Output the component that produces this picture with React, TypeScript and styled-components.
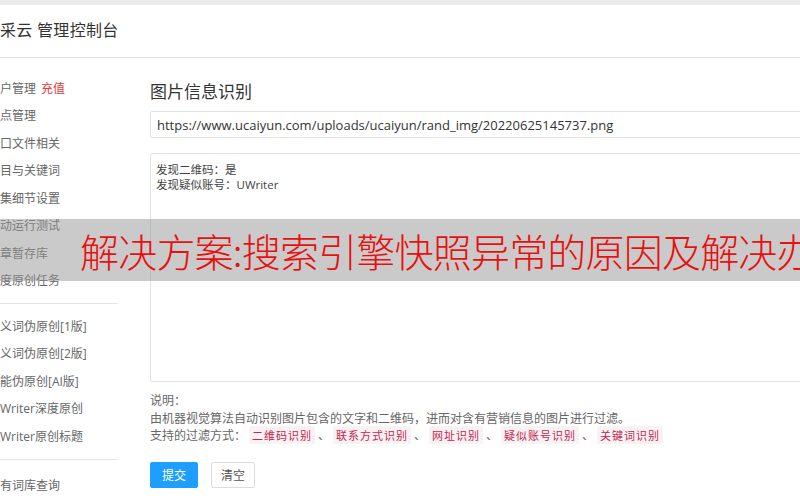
import React from "react";
import styled, { createGlobalStyle } from "styled-components";

const GlobalStyle = createGlobalStyle`
  html, body {
    margin: 0;
    padding: 0;
    background: #fff;
    overflow: hidden;
  }
  body {
    font-family: "Open Sans", "Noto Sans CJK SC", sans-serif;
    color: #333;
  }
`;

const Page = styled.div`
  position: relative;
  width: 800px;
  height: 500px;
  overflow: hidden;
  background: #fff;
`;

const TopStrip = styled.div`
  height: 5px;
  background: #ececec;
`;

const Header = styled.header`
  height: 53px;
  display: flex;
  align-items: center;
  border-bottom: 1px solid #e2e2e2;
  box-sizing: border-box;
  padding-bottom: 4px;
`;

const Title = styled.div`
  font-size: 16px;
  color: #333;
  letter-spacing: 0.3px;
  white-space: nowrap;
`;

const Body = styled.div`
  display: flex;
`;

const Sidebar = styled.nav`
  width: 150px;
  flex-shrink: 0;
  padding-top: 16px;
`;

const MenuItem = styled.div`
  height: 27.5px;
  display: flex;
  align-items: center;
  font-size: 12px;
  color: #666;
  white-space: nowrap;
`;

const Recharge = styled.span`
  color: #e4393c;
  margin-left: 5px;
`;

const Divider = styled.div<{ $after: number }>`
  width: 118px;
  height: 1px;
  background: #e6e6e6;
  margin: 9px 0 ${(p) => p.$after}px;
`;

const Main = styled.main`
  width: 690px;
  flex-shrink: 0;
  padding-top: 22px;
`;

const Heading = styled.h2`
  margin: 0;
  font-size: 17px;
  font-weight: normal;
  color: #333;
  line-height: 22px;
  font-family: "Noto Sans CJK SC", sans-serif;
`;

const UrlInput = styled.div`
  margin-top: 9px;
  height: 27px;
  box-sizing: border-box;
  border: 1px solid #e2e2e2;
  border-radius: 2px;
  padding: 0 6px;
  display: flex;
  align-items: center;
  font-size: 13px;
  color: #333;
  white-space: nowrap;
`;

const ResultBox = styled.div`
  margin-top: 15px;
  height: 229px;
  box-sizing: border-box;
  border: 1px solid #e2e2e2;
  border-radius: 2px;
  padding: 8px 5px;
  font-size: 11.5px;
  line-height: 15px;
  color: #444;
`;

const Notes = styled.div`
  margin-top: 9px;
  font-size: 12px;
  line-height: 17.5px;
  color: #666;
  font-family: "Noto Sans CJK SC", sans-serif;
`;

const Tag = styled.code`
  font-family: "Noto Sans CJK SC", sans-serif;
  font-size: 11px;
  letter-spacing: 1px;
  color: #c7254e;
  background: #f9f2f4;
  padding: 1px 3px;
  border-radius: 2px;
  margin: 0 3px;
`;

const Buttons = styled.div`
  display: flex;
  gap: 13px;
  margin-top: 17px;
`;

const Button = styled.button<{ $primary?: boolean }>`
  height: 26px;
  padding: 0 ${(p) => (p.$primary ? 11 : 9)}px;
  font-size: 12px;
  font-family: "Noto Sans CJK SC", sans-serif;
  border-radius: 2px;
  cursor: pointer;
  border: 1px solid ${(p) => (p.$primary ? "#1e9fff" : "#dcdcdc")};
  background: ${(p) => (p.$primary ? "#1e9fff" : "#fff")};
  color: ${(p) => (p.$primary ? "#fff" : "#555")};
`;

const Banner = styled.div`
  position: absolute;
  left: 0;
  top: 219px;
  width: 100%;
  height: 62px;
  background: rgba(150, 150, 150, 0.5);
  display: flex;
  align-items: center;
  padding-left: 80px;
  box-sizing: border-box;
  overflow: hidden;
`;

const BannerText = styled.div`
  font-family: "Noto Sans CJK SC", sans-serif;
  font-size: 39px;
  font-weight: 300;
  color: #e8100f;
  white-space: nowrap;
  letter-spacing: -0.8px;
`;

const menuTop = ["点管理", "口文件相关", "目与关键词", "集细节设置", "动运行测试", "章暂存库", "度原创任务"];
const menuMid = ["义词伪原创[1版]", "义词伪原创[2版]", "能伪原创[AI版]", "Writer深度原创", "Writer原创标题"];
const filters = ["二维码识别", "联系方式识别", "网址识别", "疑似账号识别", "关键词识别"];

export default function App() {
  return (
    <Page>
      <GlobalStyle />
      <TopStrip />
      <Header>
        <Title>采云 管理控制台</Title>
      </Header>
      <Body>
        <Sidebar>
          <MenuItem>
            户管理<Recharge>充值</Recharge>
          </MenuItem>
          {menuTop.map((m) => (
            <MenuItem key={m}>{m}</MenuItem>
          ))}
          <Divider $after={8} />
          {menuMid.map((m) => (
            <MenuItem key={m}>{m}</MenuItem>
          ))}
          <Divider $after={12} />
          <MenuItem>有词库查询</MenuItem>
        </Sidebar>
        <Main>
          <Heading>图片信息识别</Heading>
          <UrlInput>https://www.ucaiyun.com/uploads/ucaiyun/rand_img/20220625145737.png</UrlInput>
          <ResultBox>
            发现二维码：是
            <br />
            发现疑似账号：UWriter
          </ResultBox>
          <Notes>
            <div>说明：</div>
            <div>由机器视觉算法自动识别图片包含的文字和二维码，进而对含有营销信息的图片进行过滤。</div>
            <div>
              支持的过滤方式：
              {filters.map((f, i) => (
                <React.Fragment key={f}>
                  <Tag>{f}</Tag>
                  {i < filters.length - 1 ? "、" : ""}
                </React.Fragment>
              ))}
            </div>
          </Notes>
          <Buttons>
            <Button $primary>提交</Button>
            <Button>清空</Button>
          </Buttons>
        </Main>
      </Body>
      <Banner>
        <BannerText>解决方案:搜索引擎快照异常的原因及解决办法</BannerText>
      </Banner>
    </Page>
  );
}
